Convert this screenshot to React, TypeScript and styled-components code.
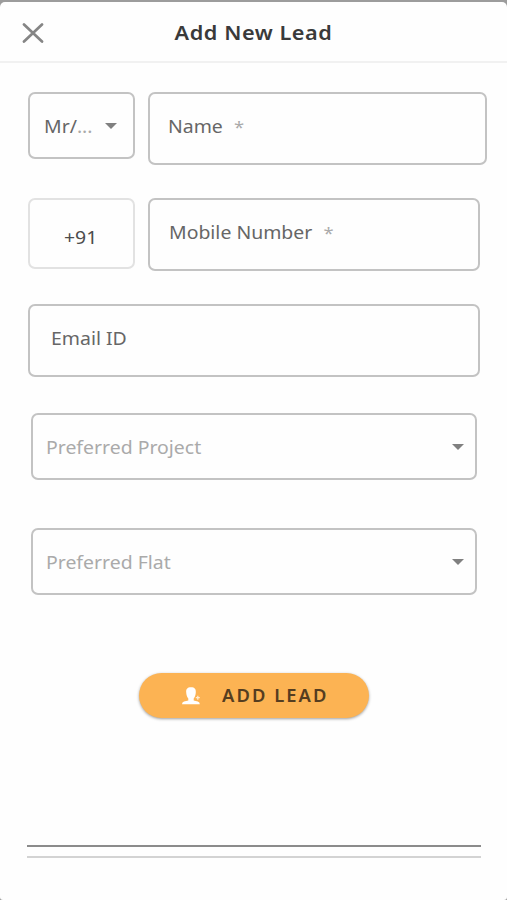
import React from "react";
import styled, { createGlobalStyle } from "styled-components";

const GlobalStyle = createGlobalStyle`
  * { box-sizing: border-box; }
  body {
    margin: 0;
    background: #fefefe;
    font-family: "Noto Sans", "Open Sans", sans-serif;
  }
`;

const Sheet = styled.main`
  display: flex;
  flex-direction: column;
  height: 900px;
  overflow: hidden;
  background: #9c9c9c;
  padding-top: 2px;
`;

const Panel = styled.div`
  flex: 1;
  display: flex;
  flex-direction: column;
  background: #fefefe;
  border-radius: 5px 5px 3px 3px;
`;

const Header = styled.header`
  display: grid;
  grid-template-columns: 66px 1fr 66px;
  align-items: center;
  height: 61px;
  border-bottom: 2px solid #f1f1f1;
`;

const CloseButton = styled.button`
  display: flex;
  padding: 2px 0 0 22px;
  border: 0;
  background: none;
`;

const Title = styled.h1`
  margin: 0;
  padding-top: 2px;
  text-align: center;
  font-size: 20px;
  line-height: 28px;
  font-weight: 600;
  letter-spacing: 0.5px;
  transform: scaleX(1.085);
  color: #3a3a3a;
`;

const Form = styled.form`
  display: flex;
  flex-direction: column;
  padding: 29px 20px 0 28px;
`;

const Row = styled.div<{ $gap?: number }>`
  display: flex;
  align-items: flex-start;
  gap: 13px;
  margin-bottom: ${(p) => p.$gap ?? 0}px;
`;

const Field = styled.div<{ $w: number; $h: number; $pad: number; $top?: number; $drop?: number; $tone?: string; $indent?: number }>`
  display: flex;
  align-items: center;
  flex: none;
  width: ${(p) => p.$w}px;
  height: ${(p) => p.$h}px;
  margin-left: ${(p) => p.$indent ?? 0}px;
  padding: ${(p) => p.$top ?? 0}px 11px ${(p) => p.$drop ?? 0}px ${(p) => p.$pad}px;
  border: 2px solid ${(p) => p.$tone ?? "#c3c3c3"};
  border-radius: 7px;
`;

const Label = styled.span<{ $color?: string }>`
  font-size: 18px;
  line-height: 24px;
  color: ${(p) => p.$color ?? "#666"};
  white-space: pre;
  transform: scaleX(1.08);
  transform-origin: left center;
`;

const Faint = styled.span`
  color: #aaa;
`;

const Required = styled(Faint)`
  margin-left: 1px;
  font-size: 17px;
  line-height: 1;
`;

const Caret = styled.i<{ $inset?: number }>`
  margin-left: auto;
  margin-right: ${(p) => p.$inset ?? 0}px;
  border: solid transparent;
  border-width: 6px 6px 0;
  border-top-color: #808080;
`;

const AddButton = styled.button`
  display: flex;
  align-items: center;
  align-self: flex-start;
  gap: 22px;
  width: 230px;
  height: 45px;
  margin: 0 0 0 111px;
  padding: 0 0 0 43px;
  border: 0;
  border-radius: 23px;
  background: #fcb353;
  box-shadow: 0 1px 3px rgba(0, 0, 0, 0.38);
`;

const ButtonText = styled.span`
  font: 600 17px/24px "Noto Sans", sans-serif;
  letter-spacing: 1.9px;
  color: #553d20;
  white-space: nowrap;
  transform: scaleX(1.08);
  transform-origin: left center;
`;

const Rules = styled.footer`
  height: 13px;
  margin: 127px 26px 0 27px;
  border-top: 2px solid #8b8b8b;
  border-bottom: 2px solid #d3d3d3;
`;

function CloseIcon() {
  return (
    <svg width="22" height="20" viewBox="0 0 22 20" fill="none" stroke="#858585" strokeWidth="2.700" strokeLinecap="round">
      <path d="M2 1.5 20 18.5M20 1.5 2 18.5" />
    </svg>
  );
}

function PersonIcon() {
  return (
    <svg width="18" height="18" viewBox="0 0 18 18" fill="#fff">
      <path d="M9 .3C5.200.3 4 2.300 4.200 5.300c.1 2.600.8 4.800 2.100 6.100v2L2 14.500Q0 15 0 17.300h17.800q0-2.300-2-2.800L11.700 13.400v-2c1.300-1.300 2-3.500 2.100-6.100C14 2.300 12.800.3 9 .3Z" />
      <path d="M15.800 8.700v4M13.800 10.700h4" stroke="#fff" strokeOpacity=".75" strokeWidth="1.300" />
    </svg>
  );
}

export default function App() {
  return (
    <>
      <GlobalStyle />
      <Sheet>
        <Panel>
          <Header>
            <CloseButton aria-label="Close">
              <CloseIcon />
            </CloseButton>
            <Title>Add New Lead</Title>
          </Header>
          <Form>
            <Row $gap={33}>
              <Field $w={107} $h={67} $pad={14}>
                <Label>Mr/<Faint>...</Faint></Label>
                <Caret $inset={5} />
              </Field>
              <Field $w={339} $h={73} $pad={18} $drop={5}>
                <Label>Name  <Required>*</Required></Label>
              </Field>
            </Row>
            <Row $gap={33}>
              <Field $w={107} $h={71} $pad={34} $top={6} $tone="#e2e2e2">
                <Label $color="#4c4c4c">+91</Label>
              </Field>
              <Field $w={332} $h={73} $pad={19} $drop={5}>
                <Label>Mobile Number  <Required>*</Required></Label>
              </Field>
            </Row>
            <Row $gap={36}>
              <Field $w={452} $h={73} $pad={21} $drop={6}>
                <Label>Email ID</Label>
              </Field>
            </Row>
            <Row $gap={48}>
              <Field $w={446} $h={67} $pad={13} $indent={3}>
                <Label $color="#aaa">Preferred Project</Label>
                <Caret />
              </Field>
            </Row>
            <Row $gap={78}>
              <Field $w={446} $h={67} $pad={13} $indent={3}>
                <Label $color="#aaa">Preferred Flat</Label>
                <Caret />
              </Field>
            </Row>
            <AddButton type="button">
              <PersonIcon />
              <ButtonText>ADD LEAD</ButtonText>
            </AddButton>
          </Form>
          <Rules />
        </Panel>
      </Sheet>
    </>
  );
}
